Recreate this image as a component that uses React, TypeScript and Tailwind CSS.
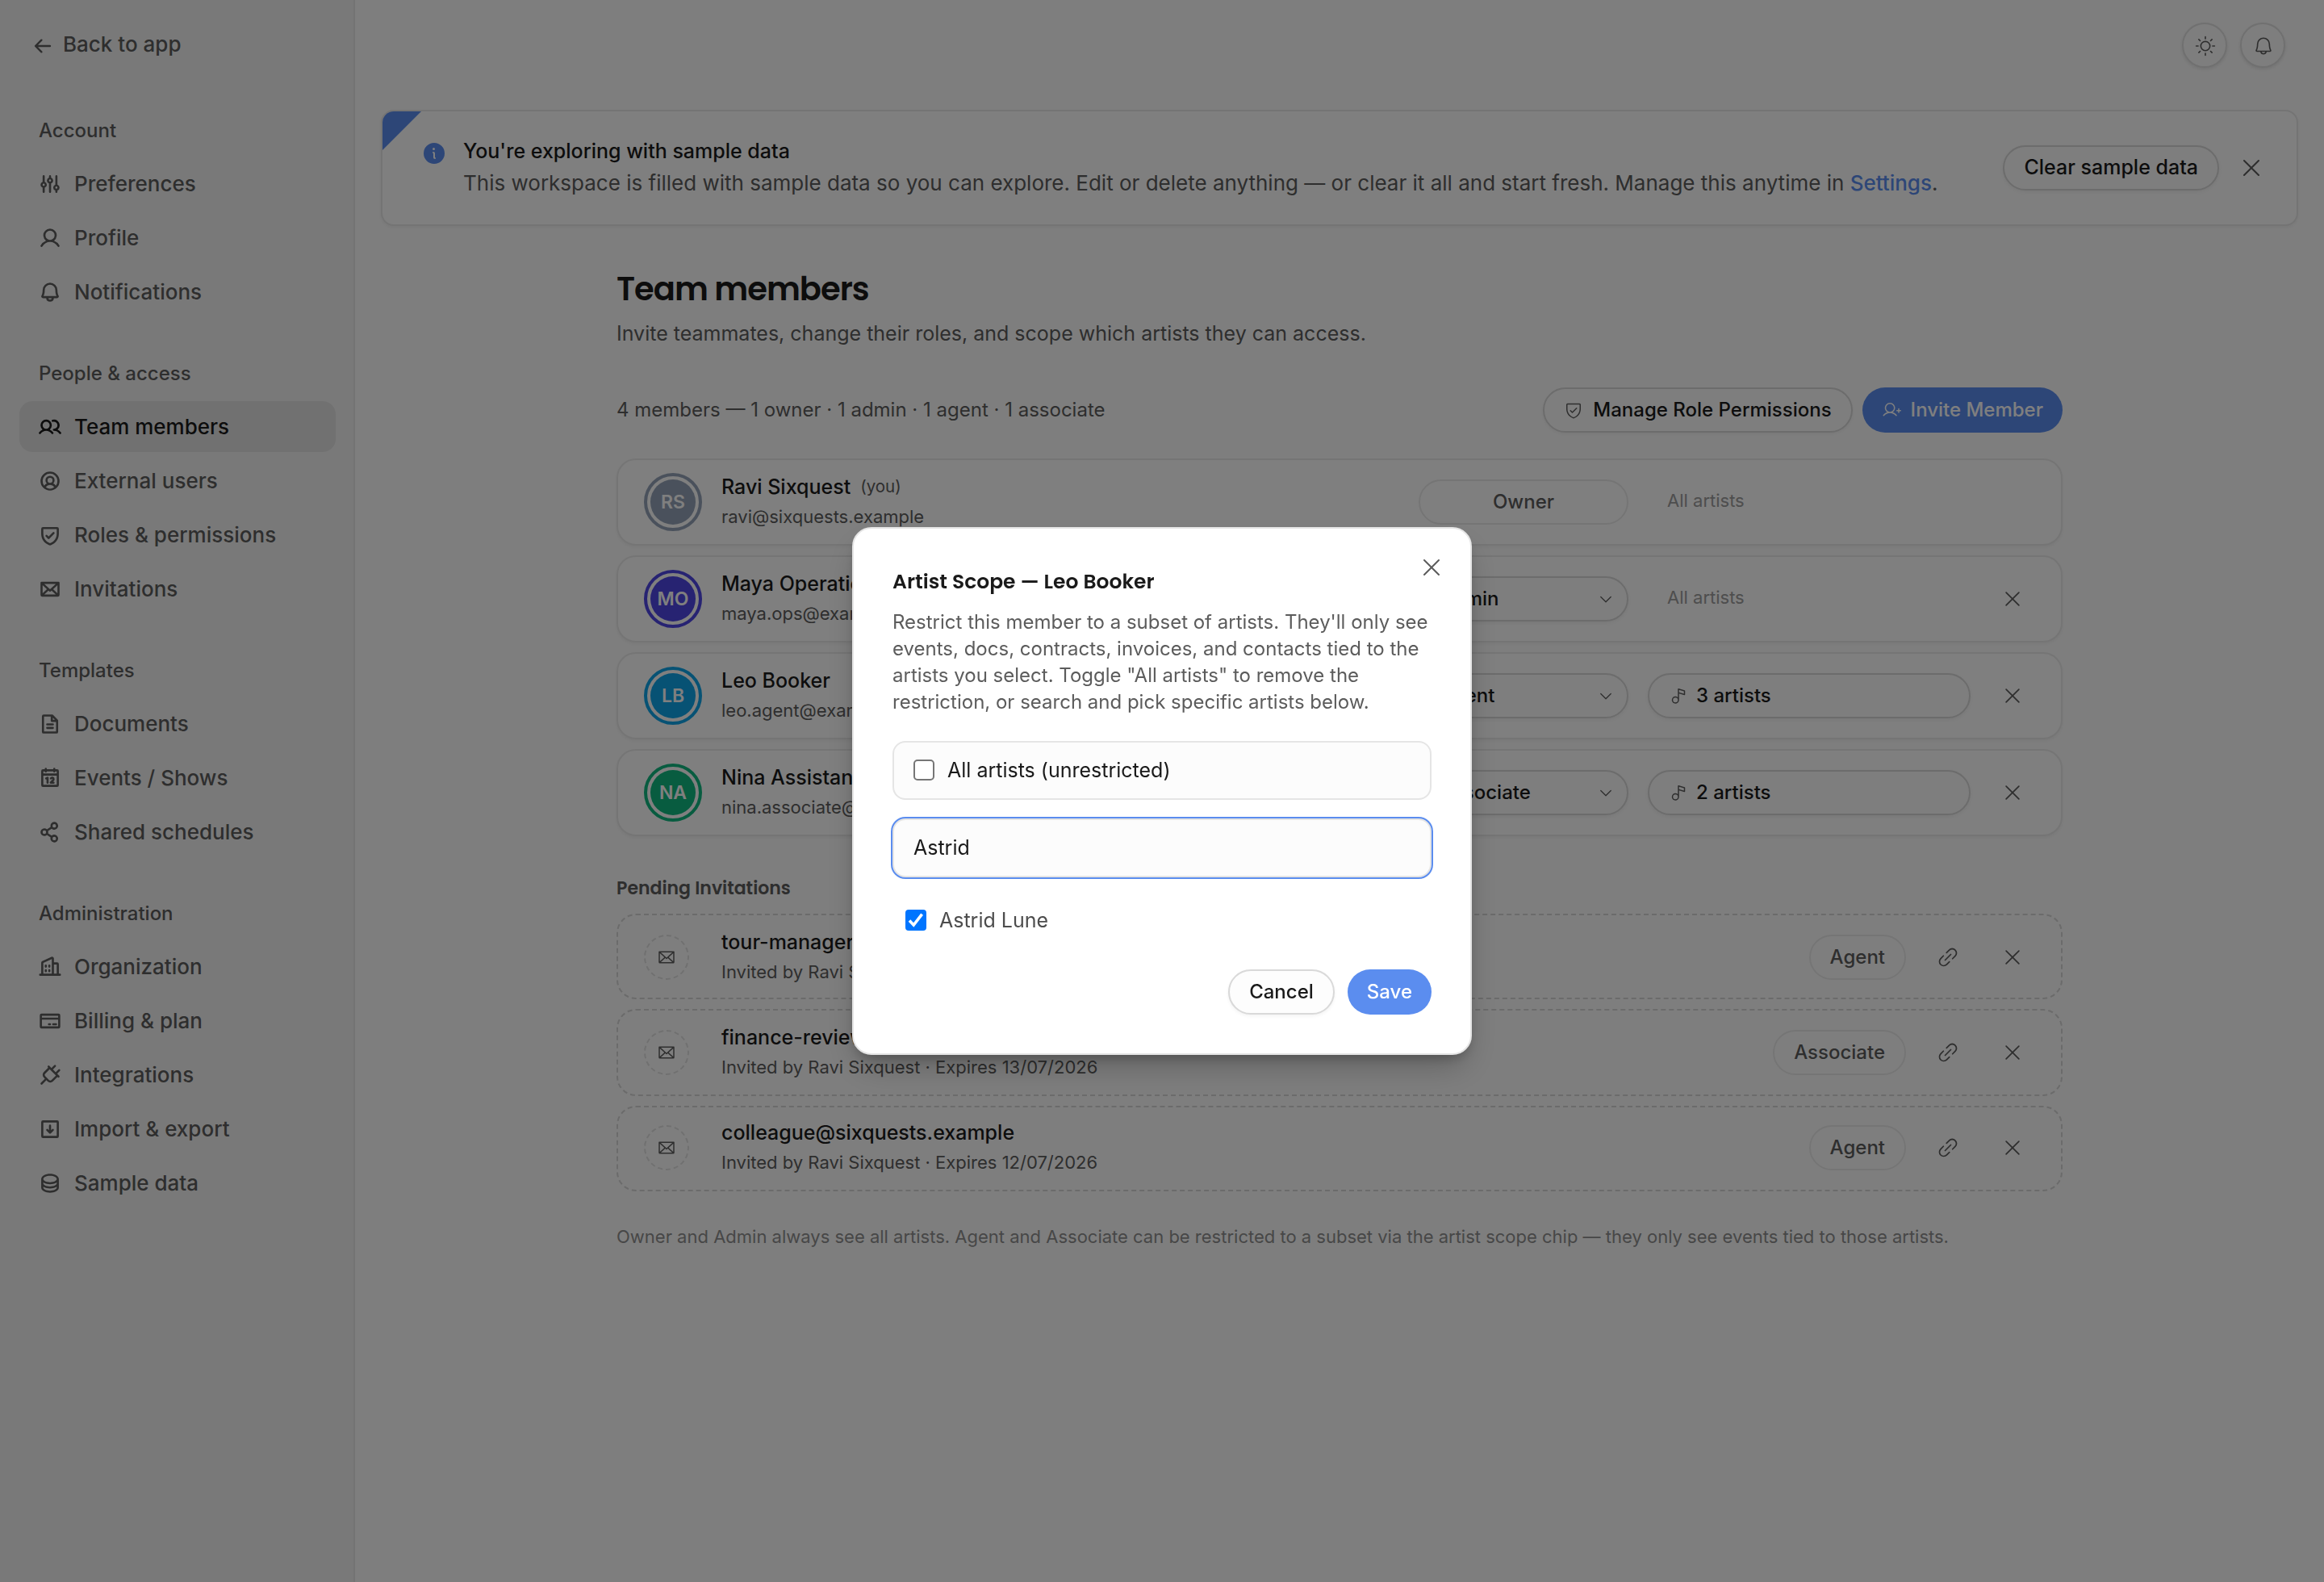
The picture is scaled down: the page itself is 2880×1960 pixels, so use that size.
import type { ReactNode } from 'react';
import type { IconType } from 'react-icons';
import clsx from 'clsx';
import {
  PiArrowLeftBold,
  PiArrowSquareDownBold,
  PiBell,
  PiBellBold,
  PiBuildingsBold,
  PiCalendarBold,
  PiCaretDown,
  PiCreditCardBold,
  PiDatabaseBold,
  PiEnvelope,
  PiEnvelopeBold,
  PiFileTextBold,
  PiInfoFill,
  PiLinkSimple,
  PiMusicNote,
  PiPlugBold,
  PiShareNetworkBold,
  PiShieldCheck,
  PiShieldCheckBold,
  PiSlidersBold,
  PiSun,
  PiUserBold,
  PiUserCircleBold,
  PiUserPlus,
  PiUsersBold,
  PiX,
} from 'react-icons/pi';

type NavItem = { label: string; icon: IconType; active?: boolean };

const NAV: { title: string; items: NavItem[] }[] = [
  {
    title: 'Account',
    items: [
      { label: 'Preferences', icon: PiSlidersBold },
      { label: 'Profile', icon: PiUserBold },
      { label: 'Notifications', icon: PiBellBold },
    ],
  },
  {
    title: 'People & access',
    items: [
      { label: 'Team members', icon: PiUsersBold, active: true },
      { label: 'External users', icon: PiUserCircleBold },
      { label: 'Roles & permissions', icon: PiShieldCheckBold },
      { label: 'Invitations', icon: PiEnvelopeBold },
    ],
  },
  {
    title: 'Templates',
    items: [
      { label: 'Documents', icon: PiFileTextBold },
      { label: 'Events / Shows', icon: PiCalendarBold },
      { label: 'Shared schedules', icon: PiShareNetworkBold },
    ],
  },
  {
    title: 'Administration',
    items: [
      { label: 'Organization', icon: PiBuildingsBold },
      { label: 'Billing & plan', icon: PiCreditCardBold },
      { label: 'Integrations', icon: PiPlugBold },
      { label: 'Import & export', icon: PiArrowSquareDownBold },
      { label: 'Sample data', icon: PiDatabaseBold },
    ],
  },
];

type Member = {
  initials: string;
  name: string;
  email: string;
  role: string;
  ring: string;
  fill: string;
  you?: boolean;
  artists?: number;
};

const MEMBERS: Member[] = [
  {
    initials: 'RS',
    name: 'Ravi Sixquest',
    email: 'ravi@sixquests.example',
    role: 'Owner',
    ring: 'border-[#94a3b8]',
    fill: 'bg-[#94a3b8]',
    you: true,
  },
  {
    initials: 'MO',
    name: 'Maya Operations',
    email: 'maya.ops@example.com',
    role: 'Admin',
    ring: 'border-[#4f46e5]',
    fill: 'bg-[#4f46e5]',
  },
  {
    initials: 'LB',
    name: 'Leo Booker',
    email: 'leo.agent@example.com',
    role: 'Agent',
    ring: 'border-[#0ea5e9]',
    fill: 'bg-[#0ea5e9]',
    artists: 3,
  },
  {
    initials: 'NA',
    name: 'Nina Assistant',
    email: 'nina.associate@example.com',
    role: 'Associate',
    ring: 'border-[#10b981]',
    fill: 'bg-[#10b981]',
    artists: 2,
  },
];

const INVITES = [
  { email: 'tour-manager@sixquests.example', role: 'Agent', expires: '14/07/2026' },
  { email: 'finance-review@sixquests.example', role: 'Associate', expires: '13/07/2026' },
  { email: 'colleague@sixquests.example', role: 'Agent', expires: '12/07/2026' },
];

const Sidebar = () => (
  <aside className="flex w-[440px] shrink-0 flex-col border-r-2 border-[#e6e6e6] bg-[#f3f3f3] pt-9 pr-[22px] pl-6">
    <a className="flex h-[38px] items-center gap-3 pl-4 text-[26px] font-medium text-[#5c5c5c]">
      <PiArrowLeftBold className="mt-1 size-[26px]" />
      <span className="-mt-0.5">Back to app</span>
    </a>
    <nav className="mt-[70px] flex flex-col gap-[52px]">
      {NAV.map(({ title, items }) => (
        <section key={title}>
          <h3 className="mb-4 pl-6 text-[24px] leading-9 font-medium text-[#5c5c5c]">{title}</h3>
          <ul className="flex flex-col gap-1">
            {items.map(({ label, icon: Icon, active }) => (
              <li
                key={label}
                className={clsx(
                  'flex h-[63px] items-center gap-4 rounded-[16px] px-6 text-[26px] font-medium',
                  active ? 'bg-[#e3e3e3] text-[#1a1a1a]' : 'text-[#5c5c5c]',
                )}
              >
                <Icon className="size-7 shrink-0" />
                <span className="-mt-px">{label}</span>
              </li>
            ))}
          </ul>
        </section>
      ))}
    </nav>
  </aside>
);

const RoundButton = ({ children }: { children: ReactNode }) => (
  <button className="flex size-14 items-center justify-center rounded-full border-2 border-[#e0e0e0] bg-[#fdfdfd] pt-px pl-px text-[#5c5c5c] shadow-[0_2px_4px_rgba(0,0,0,0.1)]">
    {children}
  </button>
);

const GhostButton = ({ className, children }: { className?: string; children: ReactNode }) => (
  <button
    className={clsx(
      'flex h-14 items-center gap-3 rounded-full border-2 border-[#d9d9d9] bg-[#fdfdfd] px-6 font-medium text-[#1a1a1a] shadow-[0_2px_4px_rgba(0,0,0,0.05)]',
      className,
    )}
  >
    {children}
  </button>
);

const PrimaryButton = ({ children }: { children: ReactNode }) => (
  <button className="flex h-14 items-center gap-3 rounded-full bg-[#5b8def] px-6 text-[24px] font-medium text-white">
    {children}
  </button>
);

const Banner = () => (
  <div className="relative flex h-36 items-center overflow-hidden rounded-[16px] border-2 border-[#e8e8e8] bg-[#fefefe] pr-8 pl-12 shadow-[0_2px_4px_rgba(0,0,0,0.05)]">
    <span className="absolute top-0 left-0 size-12 bg-[#5b8def] [clip-path:polygon(0_0,100%_0,0_100%)]" />
    <PiInfoFill className="-mt-9 size-8 shrink-0 text-[#5b8def]" />
    <div className="-mt-px ml-5 flex-1">
      <p className="text-[25px] leading-[38px] font-medium text-[#1a1a1a]">You're exploring with sample data</p>
      <p className="mt-px text-[26px] leading-10 text-[#5c5c5c]">
        This workspace is filled with sample data so you can explore. Edit or delete anything — or clear it all and
        start fresh. Manage this anytime in <a className="font-medium text-[#5b8def]">Settings</a>.
      </p>
    </div>
    <GhostButton className="text-[25px]">Clear sample data</GhostButton>
    <button className="ml-4 flex size-12 items-center justify-center text-[#5c5c5c]">
      <PiX className="size-8" />
    </button>
  </div>
);

const Role = ({ member }: { member: Member }) =>
  member.you ? (
    <span className="flex h-14 w-[260px] items-center justify-center rounded-full border-2 border-[#ebebeb] text-[24px] font-medium text-[#5c5c5c]">
      {member.role}
    </span>
  ) : (
    <button className="flex h-14 w-[260px] items-center justify-between rounded-full border-2 border-[#d9d9d9] bg-[#fdfdfd] pr-4 pl-6 text-[24px] font-medium text-[#1a1a1a] shadow-[0_2px_4px_rgba(0,0,0,0.05)]">
      {member.role}
      <PiCaretDown className="size-5 text-[#5c5c5c]" />
    </button>
  );

const MemberRow = ({ member }: { member: Member }) => (
  <li className="flex h-[108px] items-center gap-6 rounded-[24px] border-2 border-[#ebebeb] bg-[#fefefe] px-8 shadow-[0_2px_4px_rgba(0,0,0,0.05)]">
    <span className={clsx('flex size-[72px] items-center justify-center rounded-full border-4', member.ring)}>
      <span
        className={clsx(
          'flex size-14 shrink-0 items-center justify-center rounded-full text-[23px] font-semibold text-white',
          member.fill,
        )}
      >
        {member.initials}
      </span>
    </span>
    <div className="-mt-0.5 flex flex-1 flex-col gap-px leading-9">
      <p className="flex items-center gap-3 text-[25px] font-medium text-[#1a1a1a]">
        {member.name}
        {member.you && <span className="text-[20.5px] font-normal text-[#5c5c5c]">(you)</span>}
      </p>
      <p className="text-[22px] text-[#5c5c5c]">{member.email}</p>
    </div>
    <Role member={member} />
    <div className="w-[400px]">
      {member.artists ? (
        <GhostButton className="w-full text-[24px]">
          <PiMusicNote className="-mr-0.5 size-6 text-[#5c5c5c]" />
          {member.artists} artists
        </GhostButton>
      ) : (
        <p className="-mt-[3px] px-6 text-[22px] text-[#9c9c9c]">All artists</p>
      )}
    </div>
    <span className="flex size-14 items-center justify-center text-[#5c5c5c]">
      {!member.you && <PiX className="size-7" />}
    </span>
  </li>
);

const InviteRow = ({ invite }: { invite: (typeof INVITES)[number] }) => (
  <li className="flex h-[106px] items-center gap-6 rounded-[24px] border-2 border-dashed border-[#d6d6d6] bg-[#fdfdfd] px-8 text-[#5c5c5c] first:pt-0.5 last:pb-0.5 even:h-[108px]">
    <span className="mr-4 flex size-14 items-center justify-center rounded-full border-2 border-dashed border-[#e0e0e0]">
      <PiEnvelope className="size-6" />
    </span>
    <div className="-mt-px flex flex-1 flex-col gap-px leading-9">
      <p className="text-[25px] font-medium text-[#1a1a1a]">{invite.email}</p>
      <p className="text-[22px]">Invited by Ravi Sixquest · Expires {invite.expires}</p>
    </div>
    <span className="flex h-14 items-center rounded-full border-2 border-[#ebebeb] px-6 text-[24px] font-medium">
      {invite.role}
    </span>
    <span className="flex size-14 items-center justify-center">
      <PiLinkSimple className="size-7" />
    </span>
    <span className="flex size-14 items-center justify-center">
      <PiX className="size-7" />
    </span>
  </li>
);

const ArtistScopeDialog = () => (
  <div className="fixed inset-0 flex items-center justify-center bg-black/50">
    <div className="relative flex h-[654px] w-[768px] flex-col rounded-[24px] border-2 border-[#e5e5e5] bg-white p-12 shadow-[0_20px_40px_-8px_rgba(0,0,0,0.25),0_8px_16px_-6px_rgba(0,0,0,0.25)]">
      <button className="absolute top-8 right-8 text-[#5c5c5c]">
        <PiX className="size-8" />
      </button>
      <h2 className="font-[Poppins,Inter,sans-serif] text-[25px] leading-9 font-semibold text-[#1a1a1a]">
        Artist Scope — Leo Booker
      </h2>
      <p className="mt-[15px] text-[24px] leading-[33px] text-[#5c5c5c]">
        Restrict this member to a subset of artists. They'll only see events, docs, contracts, invoices, and contacts
        tied to the artists you select. Toggle "All artists" to remove the restriction, or search and pick specific
        artists below.
      </p>
      <label className="mt-8 flex h-[73px] items-center gap-4 rounded-[16px] border-2 border-[#e5e5e5] bg-[#fcfcfc] px-6 text-[25px] text-[#1a1a1a]">
        <span className="-mt-px size-[26px] rounded-[5px] border-2 border-[#767676] bg-white" />
        <span className="mt-px">All artists (unrestricted)</span>
      </label>
      <div className="mt-[23px] flex h-[73px] items-center rounded-[16px] border-2 border-[#e5e5e5] bg-[#fcfcfc] px-6 pt-px text-[25px] text-[#1a1a1a] ring-2 ring-[#5b8def]">
        Astrid
      </div>
      <label className="mt-[33px] flex h-10 items-center gap-4 pl-4 text-[25px] text-[#4d4d4d]">
        <span className="flex size-[26px] items-center justify-center rounded-[4px] bg-[#0075ff]">
          <svg viewBox="0 0 26 26" className="size-[26px]" fill="none" stroke="white" strokeWidth={3.6}>
            <path d="M5 13.6 10.2 19 20.6 5.6" />
          </svg>
        </span>
        <span className="mt-0.5">Astrid Lune</span>
      </label>
      <div className="mt-auto flex justify-end gap-4">
        <GhostButton className="text-[24px]">Cancel</GhostButton>
        <PrimaryButton>Save</PrimaryButton>
      </div>
    </div>
  </div>
);

export default function App() {
  return (
    <div className="flex h-[1960px] w-[2880px] overflow-hidden bg-[#fdfdfd] font-[Inter,sans-serif]">
      <Sidebar />
      <main className="flex flex-1 flex-col px-8">
        <header className="flex justify-end gap-4 pt-7 pr-4 pb-[52px]">
          <RoundButton>
            <PiSun className="size-[26px]" />
          </RoundButton>
          <RoundButton>
            <PiBell className="size-[26px]" />
          </RoundButton>
        </header>
        <Banner />
        <div className="mx-auto w-[1792px] pt-[54px]">
          <h1 className="font-[Poppins,Inter,sans-serif] text-[40px] leading-[48px] font-semibold tracking-tight text-[#1a1a1a]">
            Team members
          </h1>
          <p className="mt-3 text-[25px] leading-[38px] text-[#5c5c5c]">
            Invite teammates, change their roles, and scope which artists they can access.
          </p>
          <div className="mt-12 flex items-center gap-3">
            <p className="flex-1 text-[24px] text-[#5c5c5c]">4 members — 1 owner · 1 admin · 1 agent · 1 associate</p>
            <GhostButton className="text-[24px]">
              <PiShieldCheck className="size-6 text-[#5c5c5c]" />
              Manage Role Permissions
            </GhostButton>
            <PrimaryButton>
              <PiUserPlus className="size-6" />
              Invite Member
            </PrimaryButton>
          </div>
          <ul className="mt-8 flex flex-col gap-3">
            {MEMBERS.map((member) => (
              <MemberRow key={member.email} member={member} />
            ))}
          </ul>
          <h2 className="mt-12 font-[Poppins,Inter,sans-serif] text-[22px] leading-[33px] font-semibold text-[#5c5c5c]">
            Pending Invitations
          </h2>
          <ul className="mt-[15px] flex flex-col gap-3">
            {INVITES.map((invite) => (
              <InviteRow key={invite.email} invite={invite} />
            ))}
          </ul>
          <p className="mt-10 text-[22px] leading-[33px] text-[#8f8f8f]">
            Owner and Admin always see all artists. Agent and Associate can be restricted to a subset via the artist
            scope chip — they only see events tied to those artists.
          </p>
        </div>
      </main>
      <ArtistScopeDialog />
    </div>
  );
}
